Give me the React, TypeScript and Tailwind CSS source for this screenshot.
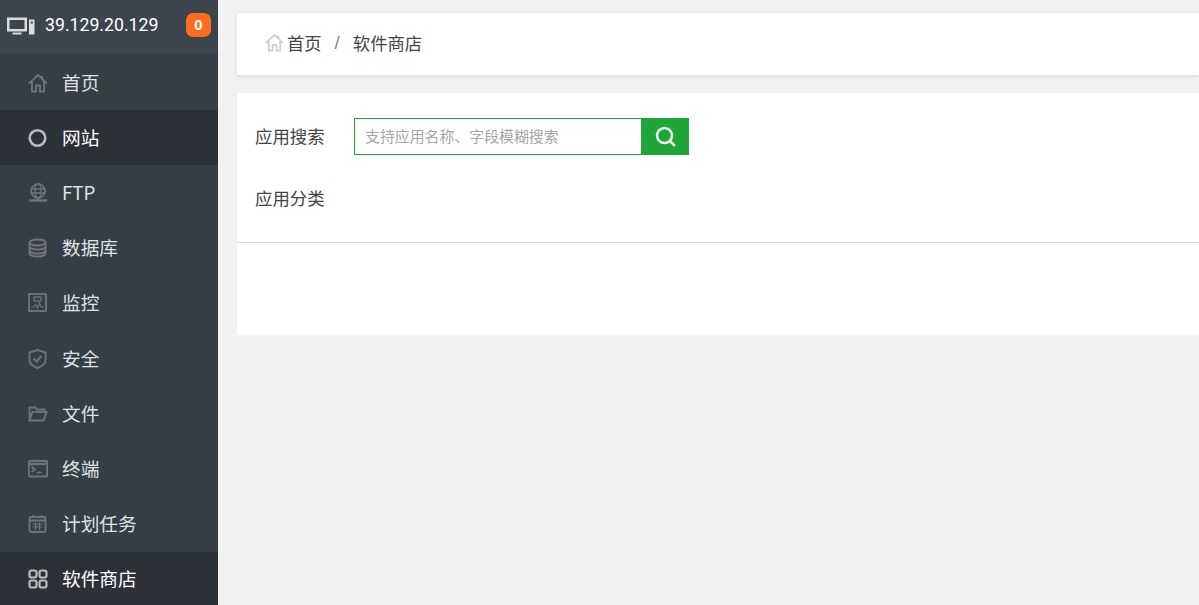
import type { ReactNode } from "react";

// Sidebar + software store search page

const cjk = "font-['Microsoft_YaHei','Noto_Sans_CJK_SC','Noto_Sans',sans-serif]";

const Ico = ({ children }: { children: ReactNode }) => (
  <svg width="20" height="20" viewBox="0 0 20 20" fill="none" stroke="currentColor" strokeWidth="1.9" className="shrink-0">
    {children}
  </svg>
);

const homePath = "M1 10.500 10 2 19 10.500M14 3V6M4 8.500V18.500H8V12.500H12V18.500H16V8.500";

const menu: { label: string; icon: ReactNode; active?: boolean }[] = [
  {
    label: "首页",
    icon: (
      <Ico>
        <path d={homePath} />
      </Ico>
    ),
  },
  {
    label: "网站",
    active: true,
    icon: (
      <Ico>
        <circle cx="9.500" cy="10" r="7.800" strokeWidth="2.600" />
      </Ico>
    ),
  },
  {
    label: "FTP",
    icon: (
      <Ico>
        <circle cx="10" cy="8" r="7" strokeWidth="1.700" />
        <ellipse cx="10" cy="8" rx="3" ry="7" strokeWidth="1.300" />
        <path d="M3 6h14M3 10h14" strokeWidth="1.300" />
        <path d="M1 17.500h18" strokeWidth="2.400" />
        <path d="M10 15v2" strokeWidth="3" />
      </Ico>
    ),
  },
  {
    label: "数据库",
    icon: (
      <Ico>
        <ellipse cx="9.500" cy="4.500" rx="8" ry="3" />
        <path d="M1.500 4.500v11c0 1.700 3.600 3 8 3s8-1.300 8-3v-11M1.500 8.500c0 1.700 3.600 3 8 3s8-1.300 8-3M1.500 12.500c0 1.700 3.600 3 8 3s8-1.300 8-3" />
      </Ico>
    ),
  },
  {
    label: "监控",
    icon: (
      <Ico>
        <rect x="1" y="1" width="17" height="17" />
        <rect x="6" y="4" width="7" height="4" strokeWidth="1.300" />
        <path d="M3 14h3l1.500-2.500 2 3.500 2-5 1.500 4H16" strokeWidth="1.200" />
      </Ico>
    ),
  },
  {
    label: "安全",
    icon: (
      <Ico>
        <path d="M9.500 1 1.500 3.500V11c0 3.500 4 6.500 8 8 4-1.500 8-4.500 8-8V3.500Z" />
        <path d="M5.500 9.500 8.500 12.500 13.500 7" strokeWidth="2" />
      </Ico>
    ),
  },
  {
    label: "文件",
    icon: (
      <Ico>
        <path d="M1.500 15V3.500H7.500L9 5.500H16.500V8M1.500 16.500H15.500L18.500 8H4.500L1.500 16.500Z" />
      </Ico>
    ),
  },
  {
    label: "终端",
    icon: (
      <Ico>
        <rect x="0.750" y="2" width="18.500" height="15.500" rx="1" />
        <path d="M1 5h18" strokeWidth="2.400" />
        <path d="M3.500 8 7 10.500 3.500 13M8.500 13.500h5" strokeWidth="1.700" />
      </Ico>
    ),
  },
  {
    label: "计划任务",
    icon: (
      <Ico>
        <rect x="1.500" y="3" width="16" height="15" rx="2" />
        <path d="M5.500 1v3M13.500 1v3M1.500 6.500h16" />
        <path d="M4.500 10h10M4.500 13h10M7.500 8.500V16M11.500 8.500V16" strokeWidth="1.200" />
      </Ico>
    ),
  },
  {
    label: "软件商店",
    active: true,
    icon: (
      <Ico>
        <rect x="1.500" y="1.500" width="7" height="7" rx="2" strokeWidth="2.200" />
        <rect x="11.500" y="1.500" width="7" height="7" rx="2" strokeWidth="2.200" />
        <rect x="1.500" y="11.500" width="7" height="7" rx="2" strokeWidth="2.200" />
        <rect x="11.500" y="11.500" width="7" height="7" rx="2" strokeWidth="2.200" />
      </Ico>
    ),
  },
];

const Sidebar = () => (
  <aside className="w-[218px] shrink-0 h-full overflow-hidden bg-[#363e45]">
    <div className="h-[55px] bg-[#3c444d] flex items-center pl-[7px] pr-[7px] border-b border-[#363e45]">
      <svg width="28" height="21" viewBox="0 0 28 20" className="shrink-0 text-[#dcdcdc] mb-[2px]" fill="currentColor">
        <path fillRule="evenodd" d="M0 1h20v14H0ZM2.500 3.500v9h15v-9Z" />
        <path d="M5.500 16h9v2h-9Z" />
        <path fillRule="evenodd" d="M22 3h5.500v15H22Zm1.800 2v2h2V5Z" />
      </svg>
      <span className="ml-[10px] mb-[3px] text-[17.7px] text-white font-['Roboto',sans-serif] flex-1">39.129.20.129</span>
      <span className="mb-[4px] w-[25px] h-[24px] rounded-[7px] bg-[#ff6b1f] text-white text-[15px] font-bold flex items-center justify-center font-['Liberation_Sans',sans-serif]">
        0
      </span>
    </div>
    {menu.map((m) => (
      <div
        key={m.label}
        className={`h-[55.2px] flex items-center pl-[28px] ${m.active ? "bg-[#2c3138] text-[#ffffff]" : "text-[#dfe1e3]"}`}
      >
        <span className={m.active ? "text-[#b9bbbd]" : "text-[#6e7378]"}>{m.icon}</span>
        <span className={`ml-[14px] mb-[2px] text-[18.7px] ${cjk}`}>{m.label}</span>
      </div>
    ))}
  </aside>
);

const Breadcrumb = () => (
  <div className="h-[62px] bg-white shadow-[0_1px_4px_rgba(0,0,0,0.12)] flex items-center pl-[28px] text-[#444]">
    <svg width="19" height="19" viewBox="0 0 20 20" fill="none" stroke="#cfcfcf" strokeWidth="1.900" className="shrink-0 -mt-[3px]">
      <path d={homePath} />
    </svg>
    <span className={`ml-[3px] mb-[2px] text-[17.3px] ${cjk}`}>首页</span>
    <span className="ml-[13px] mr-[13px] mb-[2px] text-[19px] text-[#888] font-['Liberation_Sans',sans-serif]">/</span>
    <span className={`mb-[2px] text-[17.3px] ${cjk}`}>软件商店</span>
  </div>
);

const StorePanel = () => (
  <div className="mt-[18px] h-[242px] bg-white">
    <div className="h-[150px] border-b border-[#dddddd] pt-[25px] pl-[18px] text-[#444]">
      <div className="flex items-center h-[37px]">
        <span className={`w-[99px] text-[17.4px] ${cjk}`}>应用搜索</span>
        <div className="w-[288px] h-[37px] border border-[#20a53a] bg-white flex items-center pl-[10px]">
          <span className={`text-[14.9px] text-[#a5a5a5] ${cjk}`}>支持应用名称、字段模糊搜索</span>
        </div>
        <div className="w-[47px] h-[37px] bg-[#20a53a] flex items-center justify-center">
          <svg width="22" height="22" viewBox="0 0 22 22" fill="none" stroke="#e8f6ea" strokeWidth="2.500">
            <circle cx="9.500" cy="9.500" r="7.500" />
            <path d="M15 15 20 20" />
          </svg>
        </div>
      </div>
      <div className={`mt-[30px] text-[17.4px] leading-[26px] ${cjk}`}>应用分类</div>
    </div>
  </div>
);

export default function App() {
  return (
    <div className="w-[1199px] h-[605px] overflow-hidden flex bg-[#f1f1f1]">
      <Sidebar />
      <main className="flex-1 min-w-0 pl-[19px] pt-[13px]">
        <Breadcrumb />
        <StorePanel />
      </main>
    </div>
  );
}
